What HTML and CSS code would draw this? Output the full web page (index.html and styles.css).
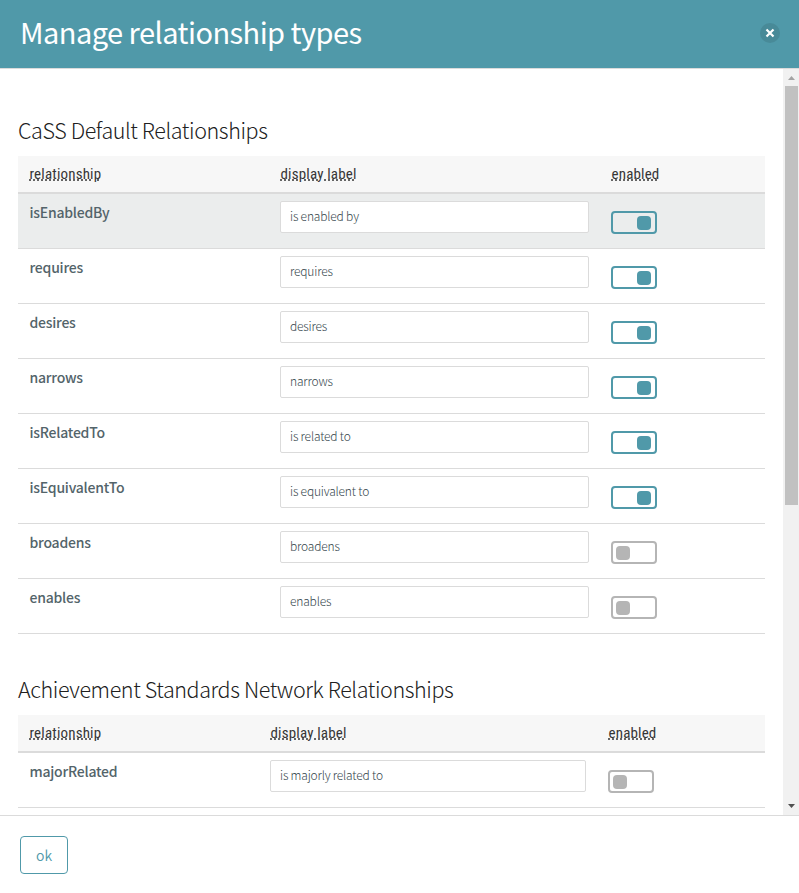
FILE: index.html
```html
<!DOCTYPE html>
<html lang="en">
<head>
<meta charset="utf-8">
<title>Manage relationship types</title>
<link rel="stylesheet" href="styles.css">
</head>
<body>
<div class="modal">
  <header class="modal-head">
    <h1>Manage relationship types</h1>
    <button class="close" aria-label="close"><svg width="20" height="20" viewBox="0 0 20 20"><path d="M6.500 6.500l7 7M13.500 6.500l-7 7"/></svg></button>
  </header>
  <div class="modal-body">
    <main class="content">
      <h2>CaSS Default Relationships</h2>
      <table class="first">
        <colgroup><col class="c1"><col class="c2"><col class="c3"></colgroup>
        <thead><tr><th><abbr>relationship</abbr></th><th><abbr>display label</abbr></th><th><abbr>enabled</abbr></th></tr></thead>
        <tbody>
          <tr class="hover"><td class="name">isEnabledBy</td><td><div class="input">is enabled by</div></td><td><span class="switch on"></span></td></tr>
          <tr><td class="name">requires</td><td><div class="input">requires</div></td><td><span class="switch on"></span></td></tr>
          <tr><td class="name">desires</td><td><div class="input">desires</div></td><td><span class="switch on"></span></td></tr>
          <tr><td class="name">narrows</td><td><div class="input">narrows</div></td><td><span class="switch on"></span></td></tr>
          <tr><td class="name">isRelatedTo</td><td><div class="input">is related to</div></td><td><span class="switch on"></span></td></tr>
          <tr><td class="name">isEquivalentTo</td><td><div class="input">is equivalent to</div></td><td><span class="switch on"></span></td></tr>
          <tr><td class="name">broadens</td><td><div class="input">broadens</div></td><td><span class="switch"></span></td></tr>
          <tr><td class="name">enables</td><td><div class="input">enables</div></td><td><span class="switch"></span></td></tr>
        </tbody>
      </table>
      <h2>Achievement Standards Network Relationships</h2>
      <table class="second">
        <colgroup><col class="c1"><col class="c2"><col class="c3"></colgroup>
        <thead><tr><th><abbr>relationship</abbr></th><th><abbr>display label</abbr></th><th><abbr>enabled</abbr></th></tr></thead>
        <tbody>
          <tr><td class="name">majorRelated</td><td><div class="input">is majorly related to</div></td><td><span class="switch"></span></td></tr>
        </tbody>
      </table>
    </main>
    <div class="scrollbar">
      <svg class="up" width="16" height="17" viewBox="0 0 16 17"><path d="M5 11h7L8.500 7z"/></svg>
      <div class="thumb"></div>
      <svg class="down" width="16" height="17" viewBox="0 0 16 17"><path d="M5 6h7L8.500 10z"/></svg>
    </div>
  </div>
  <footer class="modal-foot"><button class="ok">ok</button></footer>
</div>
</body>
</html>
```
FILE: styles.css
```css
* { box-sizing: border-box; }
body {
  margin: 0;
  background: #fff;
  font-family: "Noto Sans CJK SC", "Liberation Sans", sans-serif;
}
.modal { width: 799px; height: 893px; display: flex; flex-direction: column; overflow: hidden; }
.modal-head {
  flex: none;
  height: 69px;
  padding: 0 19px 0 20px;
  display: flex;
  justify-content: space-between;
  align-items: center;
  background: #5099a9;
  border-bottom: 1px solid #dbdbdb;
}
h1 { margin: -6px 0 0; font-size: 29px; font-weight: 400; line-height: 36px; letter-spacing: -0.54px; color: #fff; }
.close { width: 20px; height: 20px; padding: 0; border: 0; border-radius: 50%; background: #488a98; margin-top: -2px; }
.close svg { display: block; fill: none; stroke: #fff; stroke-width: 2.2; }
.modal-body { flex: none; height: 746px; display: flex; }
.content { flex: 1; padding: 47px 18px 0; overflow: hidden; }
h2 { margin: 0 0 13px; font-size: 21.5px; font-weight: 300; line-height: 27px; letter-spacing: -0.4px; color: #202020; }
table { width: 747px; table-layout: fixed; border-collapse: separate; border-spacing: 0; margin-bottom: 41px; }
.first .c1 { width: 251px; }
.first .c2 { width: 331px; }
.second .c1 { width: 241px; }
.second .c2 { width: 338px; }
th {
  height: 38px;
  padding: 0 11.5px;
  text-align: left;
  background: #f7f7f7;
  border-bottom: 2px solid #dbdbdb;
  font-family: "Roboto Condensed", Roboto, sans-serif;
  font-size: 15px;
  font-weight: 370;
  font-stretch: 75%;
  line-height: 16px;
  letter-spacing: 0.17px;
  color: #363636;
}
abbr { text-decoration: underline dotted; }
td { height: 55px; padding: 7px 11px 0; vertical-align: top; border-bottom: 1px solid #dbdbdb; }
.name { padding-left: 11.5px; font-size: 14px; font-weight: 500; line-height: 22px; letter-spacing: -0.23px; color: #53646a; }
.hover td { background: #ebeded; }
.input {
  height: 32px;
  padding: 0 9px;
  background: #fff;
  border: 1px solid #dbdbdb;
  border-radius: 2px;
  font-size: 12px;
  font-weight: 300;
  line-height: 28px;
  letter-spacing: -0.18px;
  color: #35464c;
}
.switch { display: flex; width: 46px; height: 23px; margin-top: 10px; padding: 3px; border: 2px solid #b5b5b5; border-radius: 4px; background: transparent; }
.switch::before { content: ""; width: 14px; height: 14px; border-radius: 4px; background: #b5b5b5; }
.switch.on { border-color: #5099a9; justify-content: flex-end; padding-right: 4px; }
.switch.on::before { background: #5099a9; }
.scrollbar { width: 16px; background: #f1f1f1; display: flex; flex-direction: column; }
.scrollbar svg { display: block; flex: none; }
.up { fill: #a3a3a3; }
.down { fill: #505050; margin-top: auto; }
.thumb { width: 13px; height: 419px; margin-left: 2px; background: #c1c1c1; }
.modal-foot { flex: 1; padding: 20px 20px 0; border-top: 1px solid #dbdbdb; }
.ok { display: block; width: 48px; height: 38px; padding: 0; border: 1px solid #5099a9; border-radius: 4px; background: #fff; color: #5099a9; font: 350 14px/36px "Noto Sans CJK SC", sans-serif; }
```
